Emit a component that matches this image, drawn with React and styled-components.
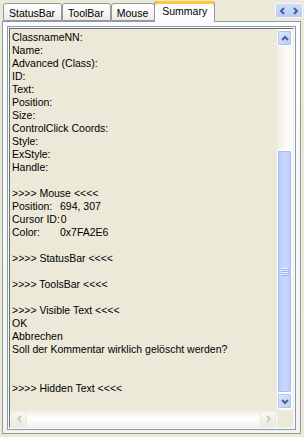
import React from "react";
import styled, { createGlobalStyle } from "styled-components";

const GlobalStyle = createGlobalStyle`
  html, body {
    margin: 0;
    padding: 0;
    background: #ece9d8;
  }
  body {
    font-family: "Liberation Sans", Arial, sans-serif;
    font-size: 10.5px;
    color: #000;
  }
`;

const Window = styled.div`
  width: 304px;
  height: 437px;
  box-sizing: border-box;
  display: flex;
  flex-direction: column;
  background: #ece9d8;
  overflow: hidden;
`;

const TabStrip = styled.div`
  display: flex;
  align-items: flex-end;
  height: 21px;
  padding-left: 3px;
  padding-right: 1px;
  position: relative;
  z-index: 1;
`;

const Tab = styled.div`
  box-sizing: border-box;
  height: ${(p) => (p.$active ? "21px" : "18px")};
  padding: ${(p) => (p.$active ? "3px 7px 0" : "2px 6px 0 5px")};
  margin-left: ${(p) => (p.$active ? "-1px" : "0")};
  margin-right: ${(p) => (p.$active ? "-1px" : "0")};
  margin-bottom: ${(p) => (p.$active ? "-1px" : "0")};
  border: 1px solid #919b9c;
  border-bottom: ${(p) => (p.$active ? "none" : "1px solid #919b9c")};
  border-top: ${(p) => (p.$active ? "none" : "1px solid #919b9c")};
  border-radius: 3px 3px 0 0;
  background: ${(p) =>
    p.$active ? "#fcfcfe" : "linear-gradient(#ffffff, #ecebe6)"};
  box-shadow: ${(p) =>
    p.$active ? "inset 0 3px 0 #ffc83c, inset 0 1px 0 #e68b2c" : "none"};
  font-size: 10.5px;
  line-height: 14px;
  white-space: nowrap;
`;

const ScrollArrows = styled.div`
  display: flex;
  margin-left: auto;
  align-self: flex-start;
  margin-top: 3px;
  border: 1px solid #f6f8fe;
  border-radius: 2px;
`;

const ArrowButton = styled.div`
  width: 13px;
  height: 13px;
  display: flex;
  align-items: center;
  justify-content: center;
  background: linear-gradient(#cfdcfd, #b9cdf9);
`;

const Panel = styled.div`
  flex: 1;
  margin: 0 3px 3px 2px;
  border: 1px solid #919b9c;
  background: linear-gradient(#fcfcfe, #f4f3ee);
  padding: 4px 4px 3px 4px;
  display: flex;
`;

const EditBox = styled.div`
  flex: 1;
  border: 1px solid #7f9db9;
  padding: 1px;
  background: #fcfcfe;
  display: flex;
`;

const EditInner = styled.div`
  flex: 1;
  border-top: 1px solid #716f64;
  border-left: 1px solid #716f64;
  border-right: 1px solid #f1efe2;
  border-bottom: 1px solid #f1efe2;
  background: #ece9d8;
  display: grid;
  grid-template-columns: 1fr 16px;
  grid-template-rows: 1fr 17px;
  min-height: 0;
`;

const TextArea = styled.div`
  padding: 2px 0 0 2px;
  overflow: hidden;
  line-height: 13px;
  white-space: pre;
`;

const Line = styled.div`
  height: 13px;
`;

const Row = styled.div`
  display: flex;
  height: 13px;
`;

const Label = styled.span`
  min-width: 47px;
  flex: none;
  margin-right: 1px;
`;

const VScroll = styled.div`
  display: flex;
  flex-direction: column;
  background: linear-gradient(90deg, #eeede5, #fcfcf9 60%, #f8f8f4);
  padding: 1px 0;
`;

const HScroll = styled.div`
  display: flex;
  align-items: center;
  background: linear-gradient(#eeede5, #fefefb 50%, #f4f3ee);
  padding: 0 1px;
`;

const Corner = styled.div`
  background: #ece9d8;
`;

const SButton = styled.div`
  box-sizing: border-box;
  width: ${(p) => (p.$horiz ? "16px" : "15px")};
  height: 16px;
  border-radius: 2px;
  display: flex;
  align-items: center;
  justify-content: center;
  border: 1px solid ${(p) => (p.$disabled ? "#e8e8e2" : "#ffffff")};
  background: ${(p) =>
    p.$disabled
      ? "linear-gradient(#f7f7f4, #eceae3)"
      : "linear-gradient(135deg, #dfe8fe, #b9cdf9)"};
  box-shadow: ${(p) => (p.$disabled ? "none" : "0 0 0 1px #b2c5ef inset")};
`;

const Thumb = styled.div`
  box-sizing: border-box;
  margin-top: ${(p) => p.$top}px;
  flex: 1;
  width: 15px;
  border-radius: 2px;
  border: 1px solid #ffffff;
  box-shadow: 0 0 0 1px #a7bdf1 inset;
  background: linear-gradient(90deg, #b8cbf8, #c6d6fd 50%, #bacdf8);
  display: flex;
  align-items: center;
  justify-content: center;
`;

const Spacer = styled.div`
  flex: 1;
`;

const Chevron = ({ dir, color = "#4d6185" }) => {
  const paths = {
    up: "M1 5 L4 2 L7 5",
    down: "M1 2 L4 5 L7 2",
    left: "M5 1 L2 4 L5 7",
    right: "M2 1 L5 4 L2 7",
  };
  const vert = dir === "up" || dir === "down";
  return (
    <svg width={vert ? 8 : 7} height={vert ? 7 : 8} viewBox={vert ? "0 0 8 7" : "0 0 7 8"}>
      <path d={paths[dir]} fill="none" stroke={color} strokeWidth="2" />
    </svg>
  );
};

const Grip = () => (
  <svg width="8" height="8" viewBox="0 0 8 8">
    {[0, 2, 4, 6].map((y) => (
      <g key={y}>
        <rect x="0" y={y} width="7" height="1" fill="#eef4fe" />
        <rect x="1" y={y + 1} width="7" height="1" fill="#8cb0f8" />
      </g>
    ))}
  </svg>
);

const lines = [
  "ClassnameNN:",
  "Name:",
  "Advanced (Class):",
  "ID:",
  "Text:",
  "Position:",
  "Size:",
  "ControlClick Coords:",
  "Style:",
  "ExStyle:",
  "Handle:",
  "",
  ">>>> Mouse <<<<",
  "Position:\t694, 307",
  "Cursor ID:\t0",
  "Color:\t0x7FA2E6",
  "",
  ">>>> StatusBar <<<<",
  "",
  ">>>> ToolsBar <<<<",
  "",
  ">>>> Visible Text <<<<",
  "OK",
  "Abbrechen",
  "Soll der Kommentar wirklich gelöscht werden?",
  "",
  "",
  ">>>> Hidden Text <<<<",
];

const renderLine = (text, i) => {
  if (text.includes("\t")) {
    const [a, b] = text.split("\t");
    return (
      <Row key={i}>
        <Label>{a}</Label>
        <span>{b}</span>
      </Row>
    );
  }
  return <Line key={i}>{text}</Line>;
};

export default function App() {
  return (
    <>
      <GlobalStyle />
      <Window>
        <TabStrip>
          <Tab>StatusBar</Tab>
          <Tab>ToolBar</Tab>
          <Tab>Mouse</Tab>
          <Tab $active>Summary</Tab>
          <ScrollArrows>
            <ArrowButton>
              <Chevron dir="left" />
            </ArrowButton>
            <ArrowButton>
              <Chevron dir="right" />
            </ArrowButton>
          </ScrollArrows>
        </TabStrip>
        <Panel>
          <EditBox>
            <EditInner>
              <TextArea>{lines.map(renderLine)}</TextArea>
              <VScroll>
                <SButton>
                  <Chevron dir="up" />
                </SButton>
                <Thumb $top={104}>
                  <Grip />
                </Thumb>
                <SButton>
                  <Chevron dir="down" />
                </SButton>
              </VScroll>
              <HScroll>
                <SButton $horiz $disabled>
                  <Chevron dir="left" color="#cbcbc4" />
                </SButton>
                <Spacer />
                <SButton $horiz $disabled>
                  <Chevron dir="right" color="#cbcbc4" />
                </SButton>
              </HScroll>
              <Corner />
            </EditInner>
          </EditBox>
        </Panel>
      </Window>
    </>
  );
}
